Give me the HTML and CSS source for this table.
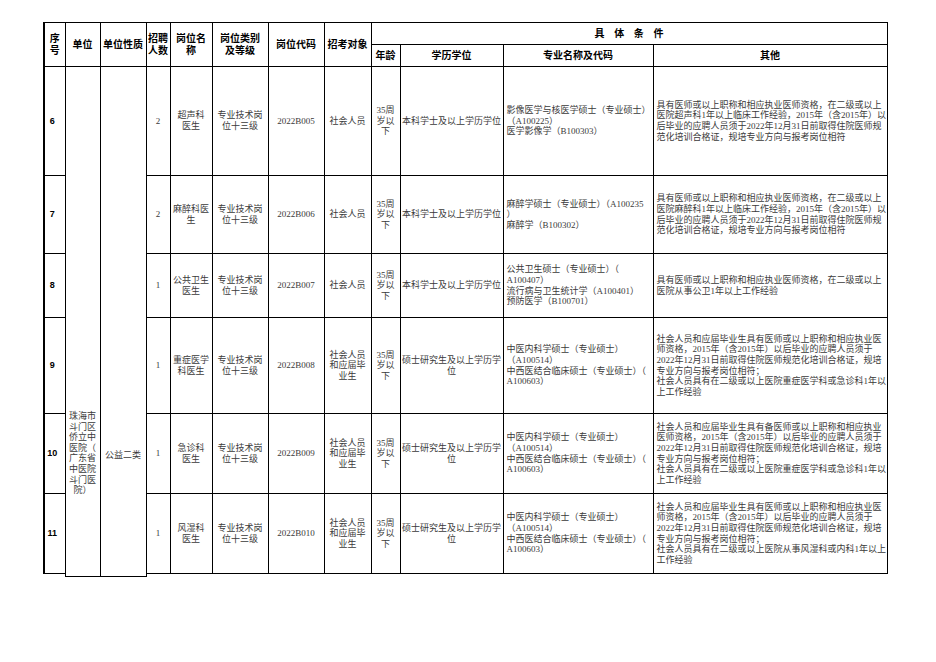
FILE: index.html
```html
<!DOCTYPE html>
<html lang="zh-CN">
<head>
<meta charset="utf-8">
<title>招聘岗位表</title>
<link rel="stylesheet" href="styles.css">
</head>
<body>
<table class="sheet">
<colgroup>
<col class="w-no"><col class="w-unit"><col class="w-type"><col class="w-num"><col class="w-name"><col class="w-level"><col class="w-code"><col class="w-target"><col class="w-age"><col class="w-edu"><col class="w-major"><col class="w-other">
</colgroup>
<thead>
<tr class="h1">
<th rowspan="2" class="first">序<br>号</th>
<th rowspan="2">单位</th>
<th rowspan="2">单位性质</th>
<th rowspan="2">招聘<br>人数</th>
<th rowspan="2">岗位名<br>称</th>
<th rowspan="2">岗位类别<br>及等级</th>
<th rowspan="2">岗位代码</th>
<th rowspan="2">招考对象</th>
<th colspan="4" class="group"><span class="spaced">具体条件</span></th>
</tr>
<tr class="h2">
<th>年龄</th>
<th>学历学位</th>
<th>专业名称及代码</th>
<th>其他</th>
</tr>
</thead>
<tbody>
<tr class="r6">
<td class="first no">6</td>
<td rowspan="7" class="unit"><div class="unit-text">珠海市<br>斗门区<br>侨立中<br>医院（<br>广东省<br>中医院<br>斗门医<br>院）</div></td>
<td rowspan="7" class="utype"><div class="utype-text">公益二类</div></td>
<td>2</td>
<td>超声科<br>医生</td>
<td>专业技术岗<br>位十三级</td>
<td>2022B005</td>
<td>社会人员</td>
<td>35周<br>岁以<br>下</td>
<td class="edu">本科学士及以上学历学位</td>
<td class="left">影像医学与核医学硕士（专业硕士）<br>（A100225）<br>医学影像学（B100303）</td>
<td class="left">具有医师或以上职称和相应执业医师资格，在二级或以上<br>医院超声科1年以上临床工作经验，2015年（含2015年）以<br>后毕业的应聘人员须于2022年12月31日前取得住院医师规<br>范化培训合格证，规培专业方向与报考岗位相符</td>
</tr>
<tr class="r7">
<td class="first no">7</td>
<td>2</td>
<td>麻醉科医<br>生</td>
<td>专业技术岗<br>位十三级</td>
<td>2022B006</td>
<td>社会人员</td>
<td>35周<br>岁以<br>下</td>
<td class="edu">本科学士及以上学历学位</td>
<td class="left">麻醉学硕士（专业硕士）（A100235<br>）<br>麻醉学（B100302）</td>
<td class="left">具有医师或以上职称和相应执业医师资格，在二级或以上<br>医院麻醉科1年以上临床工作经验，2015年（含2015年）以<br>后毕业的应聘人员须于2022年12月31日前取得住院医师规<br>范化培训合格证，规培专业方向与报考岗位相符</td>
</tr>
<tr class="r8">
<td class="first no">8</td>
<td>1</td>
<td>公共卫生<br>医生</td>
<td>专业技术岗<br>位十三级</td>
<td>2022B007</td>
<td>社会人员</td>
<td>35周<br>岁以<br>下</td>
<td class="edu">本科学士及以上学历学位</td>
<td class="left">公共卫生硕士（专业硕士）（<br>A100407）<br>流行病与卫生统计学（A100401）<br>预防医学（B100701）</td>
<td class="left">具有医师或以上职称和相应执业医师资格，在二级或以上<br>医院从事公卫1年以上工作经验</td>
</tr>
<tr class="r9">
<td class="first no">9</td>
<td>1</td>
<td>重症医学<br>科医生</td>
<td>专业技术岗<br>位十三级</td>
<td>2022B008</td>
<td>社会人员<br>和应届毕<br>业生</td>
<td>35周<br>岁以<br>下</td>
<td class="edu">硕士研究生及以上学历学<br>位</td>
<td class="left">中医内科学硕士（专业硕士）<br>（A100514）<br>中西医结合临床硕士（专业硕士）（<br>A100603）</td>
<td class="left">社会人员和应届毕业生具有医师或以上职称和相应执业医<br>师资格，2015年（含2015年）以后毕业的应聘人员须于<br>2022年12月31日前取得住院医师规范化培训合格证，规培<br>专业方向与报考岗位相符；<br>社会人员具有在二级或以上医院重症医学科或急诊科1年以<br>上工作经验</td>
</tr>
<tr class="r10">
<td class="first no">10</td>
<td>1</td>
<td>急诊科<br>医生</td>
<td>专业技术岗<br>位十三级</td>
<td>2022B009</td>
<td>社会人员<br>和应届毕<br>业生</td>
<td>35周<br>岁以<br>下</td>
<td class="edu">硕士研究生及以上学历学<br>位</td>
<td class="left">中医内科学硕士（专业硕士）<br>（A100514）<br>中西医结合临床硕士（专业硕士）（<br>A100603）</td>
<td class="left">社会人员和应届毕业生具有备医师或以上职称和相应执业<br>医师资格，2015年（含2015年）以后毕业的应聘人员须于<br>2022年12月31日前取得住院医师规范化培训合格证，规培<br>专业方向与报考岗位相符；<br>社会人员具有在二级或以上医院重症医学科或急诊科1年以<br>上工作经验</td>
</tr>
<tr class="r11">
<td class="first no">11</td>
<td>1</td>
<td>风湿科<br>医生</td>
<td>专业技术岗<br>位十三级</td>
<td>2022B010</td>
<td>社会人员<br>和应届毕<br>业生</td>
<td>35周<br>岁以<br>下</td>
<td class="edu">硕士研究生及以上学历学<br>位</td>
<td class="left">中医内科学硕士（专业硕士）<br>（A100514）<br>中西医结合临床硕士（专业硕士）（<br>A100603）</td>
<td class="left">社会人员和应届毕业生具有医师或以上职称和相应执业医<br>师资格，2015年（含2015年）以后毕业的应聘人员须于<br>2022年12月31日前取得住院医师规范化培训合格证，规培<br>专业方向与报考岗位相符；<br>社会人员具有在二级或以上医院从事风湿科或内科1年以上<br>工作经验</td>
</tr>
<tr class="rcut">
<td class="blank"></td>
<td class="blank"></td><td class="blank"></td><td class="blank"></td><td class="blank"></td><td class="blank"></td><td class="blank"></td><td class="blank"></td><td class="blank"></td><td class="blank"></td>
</tr>
</tbody>
</table>
</body>
</html>
```
FILE: styles.css
```css
html, body {
  margin: 0;
  padding: 0;
  background: #fff;
}
body {
  width: 936px;
  height: 662px;
  overflow: hidden;
}
.sheet {
  border-collapse: collapse;
  table-layout: fixed;
  width: 843px;
  margin: 22px 0 0 43px;
  font-family: "Liberation Serif", "Noto Sans CJK SC", serif;
  font-size: 9px;
  line-height: 10.6px;
  color: #3a3a3a;
}
.w-no { width: 21px; }
.w-unit { width: 35px; }
.w-type { width: 46px; }
.w-num { width: 24px; }
.w-name { width: 42px; }
.w-level { width: 56px; }
.w-code { width: 56px; }
.w-target { width: 47px; }
.w-age { width: 29px; }
.w-edu { width: 103px; }
.w-major { width: 150px; }
.w-other { width: 234px; }

.sheet th, .sheet td {
  border: 1px solid #000;
  padding: 0 2px;
  text-align: center;
  vertical-align: middle;
  white-space: nowrap;
  overflow: hidden;
}
.sheet th {
  font-family: "Liberation Sans", "Noto Sans CJK SC", sans-serif;
  font-weight: 700;
  font-size: 10px;
  line-height: 11.6px;
  color: #000;
  padding: 0 1px;
}
.sheet .first {
  border-left: 2px solid #000;
}
.h1 { height: 22px; }
.h2 { height: 22px; }
.r6 { height: 109px; }
.r7 { height: 78px; }
.r8 { height: 64px; }
.r9 { height: 96px; }
.r10 { height: 80px; }
.r11 { height: 80px; }
.rcut { height: 3px; }

.spaced {
  letter-spacing: 9.6px;
  margin-right: -9.6px;
}
.sheet td.no {
  font-family: "Liberation Sans", "Noto Sans CJK SC", sans-serif;
  font-weight: 700;
  color: #000;
  padding: 0 5px 0 0;
}
.sheet td.edu {
  padding: 0 1px;
}
.sheet td.left {
  text-align: left;
  padding: 0 2px 0 3px;
}
.sheet td.unit, .sheet td.utype {
  vertical-align: top;
  padding: 0;
}
.unit-text {
  padding-top: 344px;
}
.utype-text {
  padding-top: 383px;
}
.sheet td.blank {
  border: none;
  padding: 0;
  line-height: 0;
  font-size: 0;
}
```
